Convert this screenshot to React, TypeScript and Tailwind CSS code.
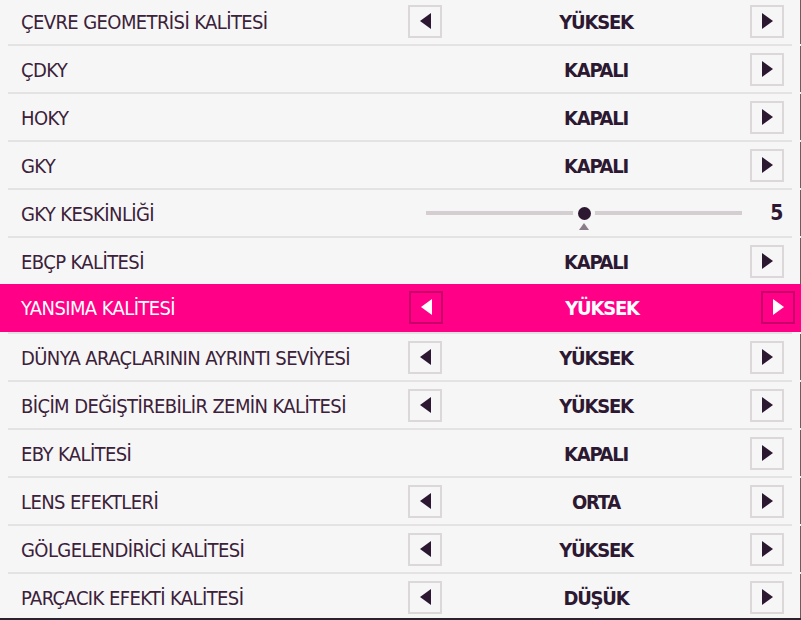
const rows = [
  { label: 'ÇEVRE GEOMETRİSİ KALİTESİ', value: 'YÜKSEK', left: true },
  { label: 'ÇDKY', value: 'KAPALI', left: false },
  { label: 'HOKY', value: 'KAPALI', left: false },
  { label: 'GKY', value: 'KAPALI', left: false },
  { label: 'GKY KESKİNLİĞİ', slider: 5 },
  { label: 'EBÇP KALİTESİ', value: 'KAPALI', left: false },
  { label: 'YANSIMA KALİTESİ', value: 'YÜKSEK', left: true, active: true },
  { label: 'DÜNYA ARAÇLARININ AYRINTI SEVİYESİ', value: 'YÜKSEK', left: true },
  { label: 'BİÇİM DEĞİŞTİREBİLİR ZEMİN KALİTESİ', value: 'YÜKSEK', left: true },
  { label: 'EBY KALİTESİ', value: 'KAPALI', left: false },
  { label: 'LENS EFEKTLERİ', value: 'ORTA', left: true },
  { label: 'GÖLGELENDİRİCİ KALİTESİ', value: 'YÜKSEK', left: true },
  { label: 'PARÇACIK EFEKTİ KALİTESİ', value: 'DÜŞÜK', left: true },
];

function Arrow({ dir, active }: { dir: 'left' | 'right'; active?: boolean }) {
  return (
    <div
      className={`w-[34px] h-[33px] border-2 flex items-center justify-center shrink-0 ${
        active ? 'border-[#c8006c]' : 'border-[#dcd8da]'
      }`}
    >
      <svg width="11" height="16" viewBox="0 0 11 16">
        {dir === 'left' ? (
          <polygon points="11,0 11,16 0,8" fill={active ? '#ffffff' : '#2d1832'} />
        ) : (
          <polygon points="0,0 0,16 11,8" fill={active ? '#ffffff' : '#2d1832'} />
        )}
      </svg>
    </div>
  );
}

function Slider({ value }: { value: number }) {
  return (
    <div className="w-[376px] flex items-center">
      <div className="w-[316px] ml-[18px] relative h-[14px] flex items-center">
        <div className="w-full h-[4px] bg-[#d4ced2]" />
        <div className="absolute left-[147px] top-[-4px] w-[22px] h-[22px] rounded-full bg-[#f6f6f6] flex items-center justify-center">
          <div className="w-[13px] h-[13px] rounded-full bg-[#2d1832]" />
        </div>
        <svg className="absolute left-[153px] top-[17px]" width="10" height="7" viewBox="0 0 10 7">
          <polygon points="0,7 10,7 5,0" fill="#8b7c89" />
        </svg>
      </div>
      <span className="ml-auto mr-[1px] pt-[2px] text-[21px] font-bold tracking-[-0.5px] text-[#2d1832]">{value}</span>
    </div>
  );
}

export default function App() {
  return (
    <div
      className="w-[801px] h-[620px] overflow-hidden bg-[#f6f6f6] border-b-2 border-[#2b2430]"
      style={{ fontFamily: '"DejaVu Sans Condensed", "Liberation Sans", sans-serif' }}
    >
      <div className="-mt-[2px] flex flex-col">
        {rows.map((row, i) => (
          <div key={i} className="flex flex-col">
            {row.active ? (
              <div className="relative -mt-[2px] h-[48px] pb-[2px] bg-[#ff0087] flex items-center pr-[6px]">
                <span className="flex-1 pl-[21px] pt-[2px] text-[20px] tracking-[-0.6px] text-white">{row.label}</span>
                <div className="w-[386px] flex items-center">
                  <Arrow dir="left" active />
                  <span className="flex-1 text-center pt-[2px] text-[20px] font-bold tracking-[-1.2px] text-white">
                    {row.value}
                  </span>
                  <Arrow dir="right" active />
                </div>
              </div>
            ) : (
              <div className="h-[46px] flex items-center pr-[16px] border-r border-[#6e5c5c]">
                <span className="flex-1 pl-[21px] pt-[2px] text-[20px] tracking-[-0.6px] text-[#3b2139]">{row.label}</span>
                {row.slider !== undefined ? (
                  <Slider value={row.slider} />
                ) : (
                  <div className="w-[376px] flex items-center">
                    {row.left ? <Arrow dir="left" /> : <div className="w-[34px] shrink-0" />}
                    <span className="flex-1 text-center pt-[2px] text-[20px] font-bold tracking-[-1.2px] text-[#2d1832]">
                      {row.value}
                    </span>
                    <Arrow dir="right" />
                  </div>
                )}
              </div>
            )}
            {i < rows.length - 1 && !rows[i + 1].active && (
              <div className="h-[2px] ml-[8px] mr-[9px] bg-[#e5e2e4]" />
            )}
            {i < rows.length - 1 && rows[i + 1].active && <div className="h-[2px]" />}
          </div>
        ))}
      </div>
    </div>
  );
}
